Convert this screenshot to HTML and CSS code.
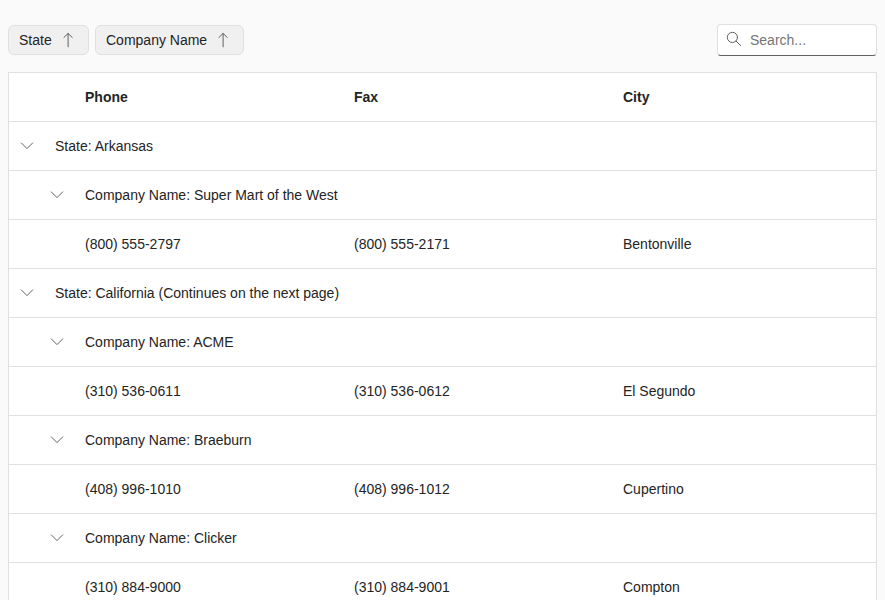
FILE: index.html
```html
<!DOCTYPE html>
<html lang="en">
<head>
<meta charset="utf-8">
<title>Customers</title>
<link rel="stylesheet" href="styles.css">
</head>
<body>
<svg class="symbols" aria-hidden="true">
  <symbol id="up" viewBox="0 0 16 16"><path d="M8.1 14.8V1.6M3.9 5.5L8.1 1.4l4.2 4.1"/></symbol>
  <symbol id="down" viewBox="0 0 16 16"><path d="M2.3 4.9L8 10.6l5.7-5.7"/></symbol>
  <symbol id="search" viewBox="0 0 16 16"><circle cx="6.4" cy="6.4" r="5.1"/><path d="M10.1 10.1L14.7 14.6"/></symbol>
</svg>
<div class="toolbar">
  <div class="chips">
    <div class="chip state">State<svg class="icon"><use href="#up"/></svg></div>
    <div class="chip company">Company Name<svg class="icon"><use href="#up"/></svg></div>
  </div>
  <label class="search"><svg class="icon"><use href="#search"/></svg><input type="text" placeholder="Search..."></label>
</div>
<div class="grid">
  <div class="row header"><span>Phone</span><span>Fax</span><span>City</span></div>
  <div class="group"><svg class="icon"><use href="#down"/></svg><span>State: Arkansas</span></div>
  <div class="group nested"><svg class="icon"><use href="#down"/></svg><span>Company Name: Super Mart of the West</span></div>
  <div class="row"><span>(800) 555-2797</span><span>(800) 555-2171</span><span>Bentonville</span></div>
  <div class="group"><svg class="icon"><use href="#down"/></svg><span>State: California (Continues on the next page)</span></div>
  <div class="group nested"><svg class="icon"><use href="#down"/></svg><span>Company Name: ACME</span></div>
  <div class="row"><span>(310) 536-0611</span><span>(310) 536-0612</span><span>El Segundo</span></div>
  <div class="group nested"><svg class="icon"><use href="#down"/></svg><span>Company Name: Braeburn</span></div>
  <div class="row"><span>(408) 996-1010</span><span>(408) 996-1012</span><span>Cupertino</span></div>
  <div class="group nested"><svg class="icon"><use href="#down"/></svg><span>Company Name: Clicker</span></div>
  <div class="row"><span>(310) 884-9000</span><span>(310) 884-9001</span><span>Compton</span></div>
</div>
</body>
</html>
```
FILE: styles.css
```css
* { box-sizing: border-box; }
html { height: 100%; overflow: hidden; }
body {
  margin: 0;
  padding: 24px 8px 0;
  height: 600px;
  overflow: hidden;
  background: #fafafa;
  color: #242424;
  font: 14px/20px "Liberation Sans", Arial, sans-serif;
}
.symbols { display: none; }
.icon {
  flex: none;
  width: 16px;
  height: 16px;
  fill: none;
  stroke: #616161;
  stroke-width: 1;
  stroke-linecap: round;
}
.toolbar {
  display: flex;
  align-items: center;
  justify-content: space-between;
  height: 32px;
  margin-bottom: 16px;
}
.chips { display: flex; gap: 6px; }
.chip {
  display: flex;
  align-items: center;
  justify-content: space-between;
  height: 30px;
  padding: 0 12px 0 10px;
  border: 1px solid #e0e0e0;
  border-radius: 6px;
  background: #f0f0f0;
}
.state { width: 81px; }
.company { width: 149px; }
.search {
  display: flex;
  align-items: center;
  width: 160px;
  height: 32px;
  padding: 0 8px;
  gap: 8px;
  border: 1px solid #e0e0e0;
  border-bottom-color: #616161;
  border-radius: 4px;
  background: #fff;
}
.search .icon { margin-bottom: 2px; }
.search input {
  min-width: 0;
  width: 100%;
  padding: 0;
  border: 0;
  outline: 0;
  background: transparent;
  font: inherit;
}
.search input::placeholder { color: #757575; opacity: 1; }
.grid { border: 1px solid #e0e0e0; background: #fff; }
.row, .group {
  height: 49px;
  align-items: center;
  border-bottom: 1px solid #e0e0e0;
}
.row {
  display: grid;
  grid-template-columns: repeat(3, 1fr);
  padding-left: 60px;
  font-kerning: none;
}
.row span { padding-left: 16px; }
.header { font-weight: bold; font-kerning: auto; }
.group { display: flex; gap: 20px; padding-left: 10px; }
.nested { padding-left: 40px; }
```
